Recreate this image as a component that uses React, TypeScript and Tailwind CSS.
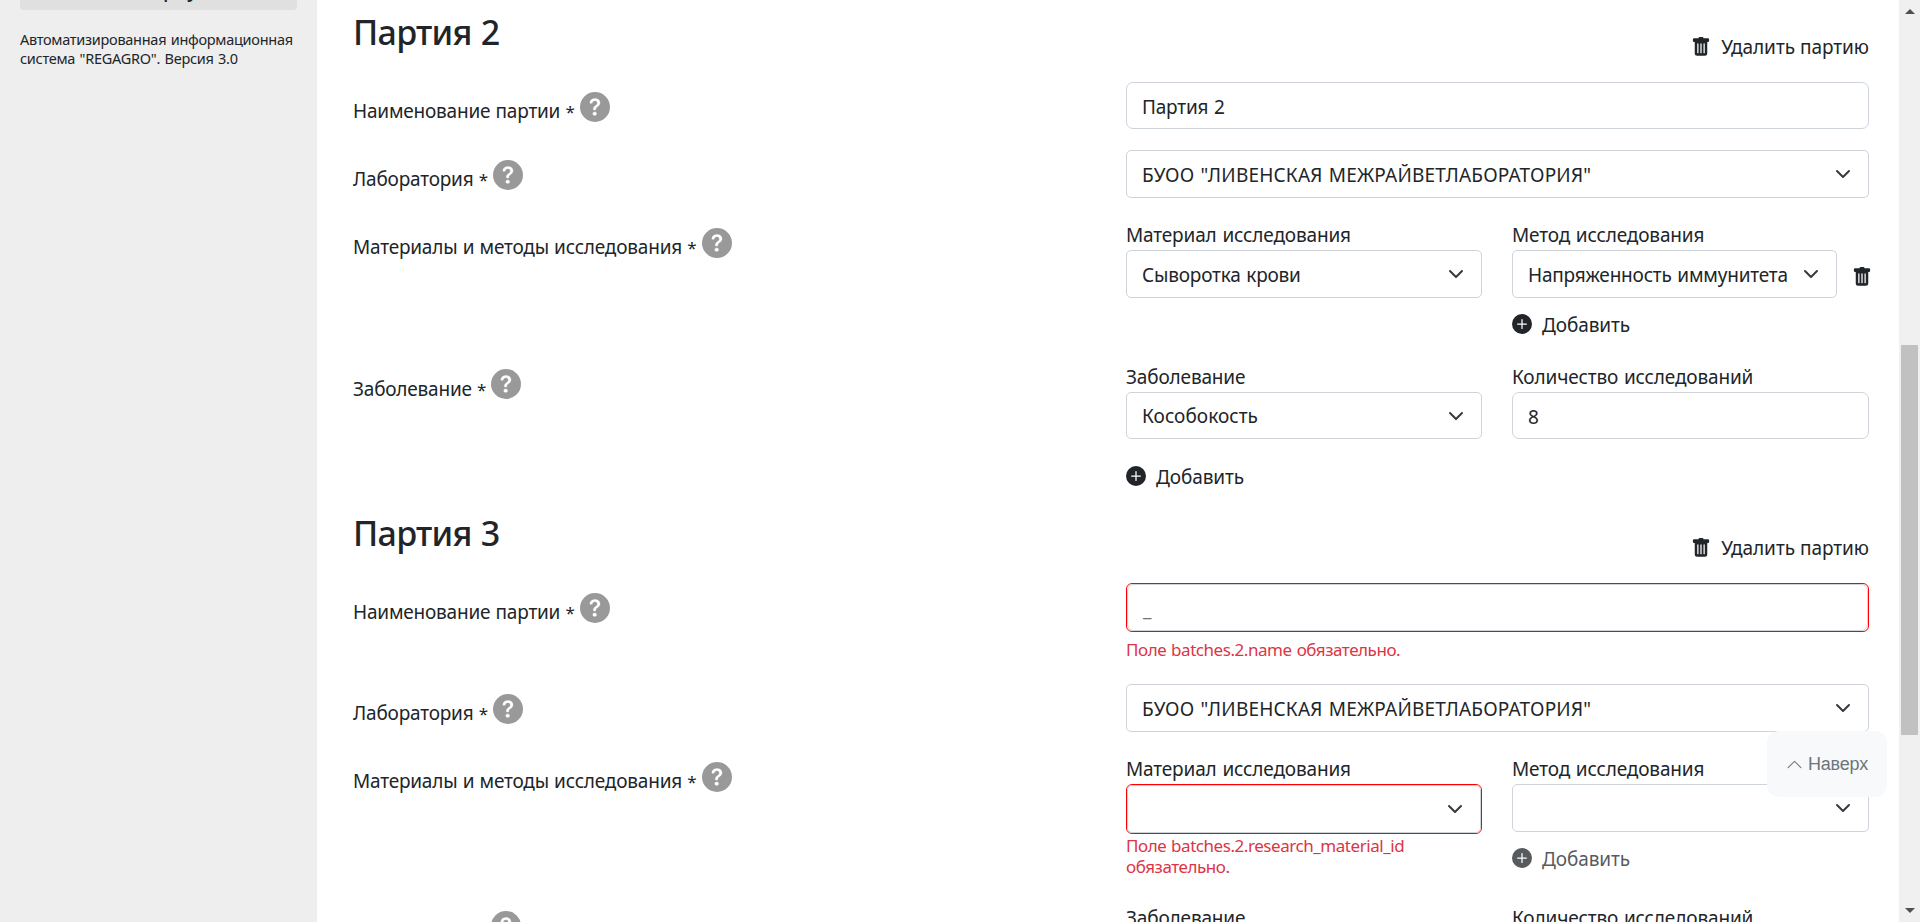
import type { ReactNode } from "react";
import { BsChevronUp, BsPlusCircleFill, BsTrashFill } from "react-icons/bs";

function Chevron() {
  return (
    <svg viewBox="0 0 16 16" className="h-4 w-4 shrink-0" fill="none" stroke="#343a40" strokeWidth="2" strokeLinecap="round" strokeLinejoin="round">
      <path d="m2 5 6 6 6-6" />
    </svg>
  );
}

function Help({ className }: { className: string }) {
  return (
    <svg viewBox="0 0 16 16" className={`h-[30px] w-[30px] shrink-0 ${className}`}>
      <circle cx="8" cy="8" r="8" fill="#999" />
      <path
        d="M5.496 6.033h.825c.138 0 .248-.113.266-.25.09-.656.54-1.134 1.342-1.134.686 0 1.314.343 1.314 1.168 0 .635-.374.927-.965 1.371-.673.489-1.206 1.06-1.168 1.987l.003.217a.25.25 0 0 0 .25.246h.811a.25.25 0 0 0 .25-.25v-.105c0-.718.273-.927 1.01-1.486.609-.463 1.244-.977 1.244-2.056 0-1.511-1.276-2.241-2.673-2.241-1.267 0-2.655.59-2.75 2.286a.237.237 0 0 0 .241.247zm2.325 6.443c.61 0 1.029-.394 1.029-.927 0-.552-.42-.94-1.029-.94-.584 0-1.009.388-1.009.94 0 .533.425.927 1.01.927z"
        fill="#fff"
        stroke="#fff"
        strokeWidth="0.15"
      />
    </svg>
  );
}

function Input({ value, placeholder = false }: { value: string; placeholder?: boolean }) {
  return (
    <div className={`flex h-[47px] w-full items-center rounded-[7px] border border-[#ced4da] bg-white px-[15px] ${placeholder ? "text-[#6c757d]" : ""}`}>
      <span className={placeholder ? "pt-[3px]" : "pt-0.5"}>{value}</span>
    </div>
  );
}

function Select({ value = "", short = false }: { value?: string; short?: boolean }) {
  return (
    <div className={`flex w-full items-center justify-between rounded-[5px] border border-[#ced4da] bg-white pr-[17px] pl-[15px] ${short ? "h-[47px]" : "h-12"}`}>
      <span className={`whitespace-nowrap ${short ? "pt-px" : "pt-0.5"}`}>{value}</span>
      <Chevron />
    </div>
  );
}

function Invalid({ children }: { children: ReactNode }) {
  return <div className="w-full rounded-[6px] border border-[#f00] bg-white">{children}</div>;
}

function Row({ label, className, raised = false, children }: { label: string; className: string; raised?: boolean; children: ReactNode }) {
  return (
    <div className={`flex ${className}`}>
      <div className="flex w-[773px] shrink-0 items-start">
        <span className="whitespace-nowrap pt-4 [word-spacing:0.5px]">
          {label} <span className="text-[17px]">*</span>
        </span>
        <Help className={raised ? "mt-[9px] ml-[5px]" : "mt-2.5 ml-[5.5px]"} />
      </div>
      <div className="w-[743px]">{children}</div>
    </div>
  );
}

function Field({ label, children }: { label: string; children: ReactNode }) {
  return (
    <div className="flex flex-col">
      <div className="h-8 whitespace-nowrap pt-1 tracking-[-0.15px]">{label}</div>
      {children}
    </div>
  );
}

function Add({ disabled = false, className }: { disabled?: boolean; className: string }) {
  return (
    <button className={`flex h-5 items-center gap-2.5 ${disabled ? "opacity-75" : ""} ${className}`}>
      <BsPlusCircleFill className="h-5 w-5" />
      <span className="pt-px tracking-[-0.1px]">Добавить</span>
    </button>
  );
}

function Header({ title }: { title: string }) {
  return (
    <div className="flex h-[82px] items-start justify-between pr-[30px]">
      <h3 className="pt-2 text-[34px] leading-[48px] font-medium tracking-[-0.7px]">{title}</h3>
      <button className="flex items-center gap-[10px] pt-[34px]">
        <BsTrashFill className="h-5 w-5" />
        <span className="tracking-[-0.03px]">Удалить партию</span>
      </button>
    </div>
  );
}

const LAB = 'БУОО "ЛИВЕНСКАЯ МЕЖРАЙВЕТЛАБОРАТОРИЯ"';

export default function App() {
  return (
    <div className="flex h-[922px] w-[1920px] overflow-hidden bg-white font-['Noto_Sans','Open_Sans',sans-serif] text-[19px] leading-[26px] tracking-[-0.2px] text-[#212529] [word-spacing:1px]">
      <aside className="w-[317px] shrink-0 bg-[#eee] px-5">
        <div className="flex h-2.5 w-[277px] items-end overflow-hidden rounded-b-[4px] bg-[#e0e0e0] pl-[108px]">
          <span className="mb-[7px] text-[20px] leading-[26px] font-medium">Свернуть</span>
        </div>
        <p className="mt-[20px] whitespace-nowrap text-[14.5px] leading-[19px] tracking-[-0.28px]">
          Автоматизированная информационная
          <br />
          система "REGAGRO". Версия 3.0
        </p>
      </aside>

      <main className="relative w-[1582px] shrink-0 overflow-hidden pl-9">
        <section>
          <Header title="Партия 2" />
          <Row label="Наименование партии" className="h-[68px]">
            <Input value="Партия 2" />
          </Row>
          <Row label="Лаборатория" className="h-[68px]">
            <div className="tracking-[0.2px]"><Select value={LAB} /></div>
          </Row>
          <Row label="Материалы и методы исследования" className="h-[142px]">
            <div className="grid grid-cols-[356px_357px] gap-[30px]">
              <Field label="Материал исследования">
                <Select value="Сыворотка крови" />
              </Field>
              <Field label="Метод исследования">
                <div className="flex items-center gap-[15px]">
                  <div className="w-[325px] shrink-0"><Select value="Напряженность иммунитета" /></div>
                  <BsTrashFill className="mt-1.5 h-5 w-5 shrink-0" />
                </div>
                <Add className="mt-4" />
              </Field>
            </div>
          </Row>
          <Row label="Заболевание" className="h-[141px]" raised>
            <div className="grid grid-cols-[356px_357px] gap-[30px]">
              <Field label="Заболевание">
                <div className="tracking-[0.05px]"><Select value="Кособокость" short /></div>
                <Add className="mt-[27px]" />
              </Field>
              <Field label="Количество исследований">
                <Input value="8" />
              </Field>
            </div>
          </Row>
        </section>

        <section>
          <Header title="Партия 3" />
          <Row label="Наименование партии" className="h-[101px]">
            <Invalid><Input value="_" placeholder /></Invalid>
            <p className="mt-[7px] text-[17px] leading-[21px] tracking-[-0.45px] text-[#dc3545]">Поле batches.2.name обязательно.</p>
          </Row>
          <Row label="Лаборатория" className="h-[68px]">
            <div className="tracking-[0.2px]"><Select value={LAB} /></div>
          </Row>
          <Row label="Материалы и методы исследования" className="h-[149px]">
            <div className="grid grid-cols-[356px_357px] gap-[30px]">
              <Field label="Материал исследования">
                <Invalid><Select /></Invalid>
                <p className="mt-px text-[17px] leading-[21px] tracking-[-0.45px] text-[#dc3545]">
                  Поле batches.2.research_material_id обязательно.
                </p>
              </Field>
              <Field label="Метод исследования">
                <Select />
                <Add disabled className="mt-4" />
              </Field>
            </div>
          </Row>
          <div className="flex h-[141px]">
            <div className="flex w-[773px] shrink-0 items-start">
              <span className="whitespace-nowrap pt-[22px]">Заболевание *</span>
              <Help className="mt-2.5 ml-[3px]" />
            </div>
            <div className="grid w-[743px] grid-cols-[356px_357px] gap-[30px]">
              <Field label="Заболевание"><Select short /></Field>
              <Field label="Количество исследований"><Input value="" /></Field>
            </div>
          </div>
        </section>

        <button className="absolute top-[731px] right-3 flex h-[66px] w-[120px] items-center justify-center gap-[5px] rounded-xl bg-[#f8f9fa] font-['Liberation_Sans',sans-serif] text-[18px] tracking-[-0.2px] text-[#6c757d]">
          <BsChevronUp className="h-[17px] w-[17px]" />
          Наверх
        </button>
      </main>

      <div className="flex w-[21px] shrink-0 flex-col items-center bg-[#f0f0f0]">
        <svg viewBox="0 0 10 5" className="mt-[9px] h-[5px] w-[10px]"><path d="M0 5 5 0l5 5z" fill="#505050" /></svg>
        <div className="mt-[331px] h-[390px] w-[17px] bg-[#c1c1c1]" />
        <svg viewBox="0 0 10 5" className="mt-[173px] h-[5px] w-[10px]"><path d="M0 0h10L5 5z" fill="#505050" /></svg>
      </div>
    </div>
  );
}
